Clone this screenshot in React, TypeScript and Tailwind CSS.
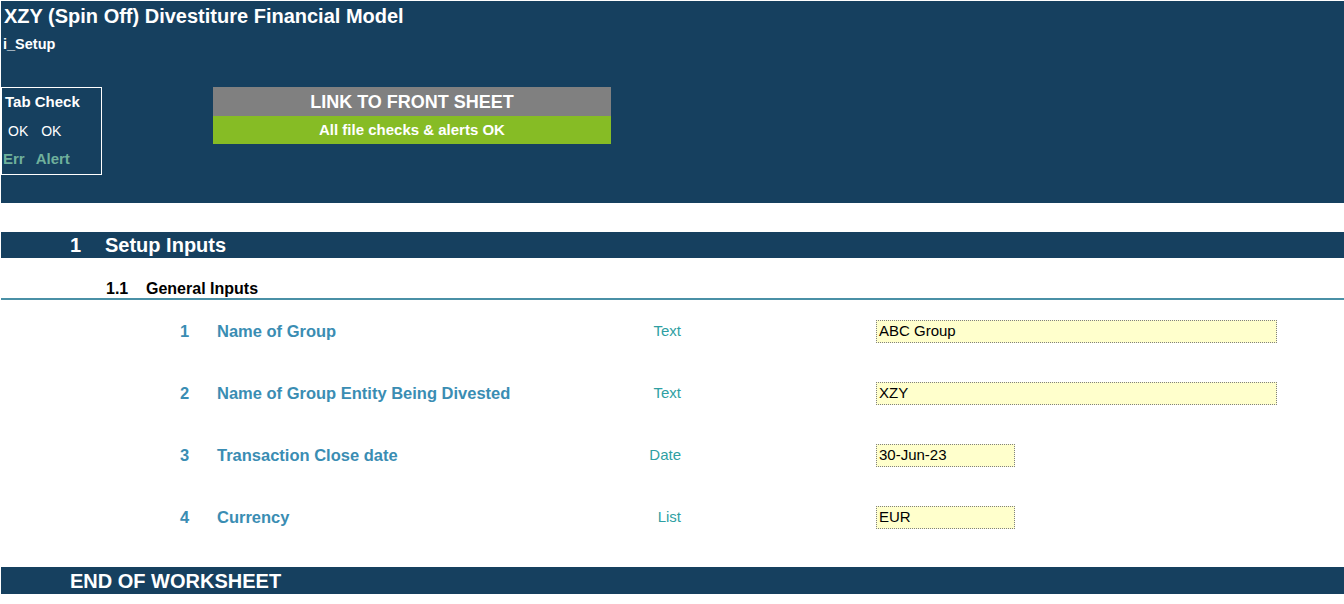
import React from "react";

const rows = [
  { n: "1", label: "Name of Group", type: "Text", value: "ABC Group", wide: true },
  { n: "2", label: "Name of Group Entity Being Divested", type: "Text", value: "XZY", wide: true },
  { n: "3", label: "Transaction Close date", type: "Date", value: "30-Jun-23", wide: false },
  { n: "4", label: "Currency", type: "List", value: "EUR", wide: false },
];

export default function App() {
  return (
    <div
      className="w-[1344px] h-[604px] bg-white pt-[1px] pl-[1px] overflow-hidden"
      style={{ fontFamily: '"Liberation Sans", Arial, sans-serif' }}
    >
      {/* Top panel */}
      <div className="h-[202px] bg-[#16405f] flex flex-col">
        <div className="pl-[3px] pt-[3px] h-[29px] text-[20px] leading-[24px] font-bold text-white">
          XZY (Spin Off) Divestiture Financial Model
        </div>
        <div className="pl-[2px] pt-[6px] h-[30px] text-[14.5px] leading-[17px] font-bold text-white">
          i_Setup
        </div>
        <div className="mt-[27px] flex items-start">
          <div className="w-[101px] h-[88px] border border-white flex flex-col text-[14px]">
            <div className="pl-[3px] pt-[5px] h-[29px] font-bold text-[15px] text-white leading-[17px]">Tab Check</div>
            <div className="pl-[6px] h-[29px] pt-[6px] text-white leading-[17px] flex gap-[13px]">
              <span>OK</span>
              <span>OK</span>
            </div>
            <div className="pl-[1px] pt-[4px] font-bold text-[15px] text-[#6fb09c] leading-[17px] flex gap-[11px]">
              <span>Err</span>
              <span>Alert</span>
            </div>
          </div>
          <div className="ml-[111px] w-[398px] flex flex-col">
            <div className="h-[29px] pt-[2px] bg-[#808080] flex items-center justify-center text-white font-bold text-[18px]">
              LINK TO FRONT SHEET
            </div>
            <div className="h-[28px] pt-[1px] bg-[#86bc25] flex items-center justify-center text-white font-bold text-[15px]">
              All file checks &amp; alerts OK
            </div>
          </div>
        </div>
      </div>

      {/* Section bar */}
      <div className="mt-[29px] h-[26px] bg-[#16405f] flex items-center text-white font-bold text-[20px]">
        <span className="pl-[69px] w-[104px]">1</span>
        <span>Setup Inputs</span>
      </div>

      {/* Sub heading */}
      <div className="h-[40px] flex items-end text-[16px] leading-[18px] font-bold text-black">
        <span className="pl-[105px] w-[145px]">1.1</span>
        <span>General Inputs</span>
      </div>
      <div className="h-[2px] bg-[#4a90a6]" />

      {/* Rows */}
      <div className="flex flex-col">
        {rows.map((r) => (
          <div key={r.n} className="h-[62px] flex items-center">
            <span className="w-[179px]" />
            <span className="w-[37px] text-[16.5px] font-bold text-[#3a8db3]">{r.n}</span>
            <span className="w-[375px] text-[16.5px] font-bold text-[#3a8db3]">{r.label}</span>
            <span className="w-[89px] text-right text-[15px] text-[#2f9fa3]">{r.type}</span>
            <span className="w-[195px]" />
            <div
              className={
                (r.wide ? "w-[401px]" : "w-[139px]") +
                " h-[23px] bg-[#ffffcc] border border-dotted border-[#808080] flex items-center pl-[2px] text-[15px] text-black"
              }
            >
              {r.value}
            </div>
          </div>
        ))}
      </div>

      {/* End bar */}
      <div className="mt-[19px] h-[27px] bg-[#16405f] flex items-center text-white font-bold text-[20px]">
        <span className="pl-[69px]">END OF WORKSHEET</span>
      </div>
    </div>
  );
}
